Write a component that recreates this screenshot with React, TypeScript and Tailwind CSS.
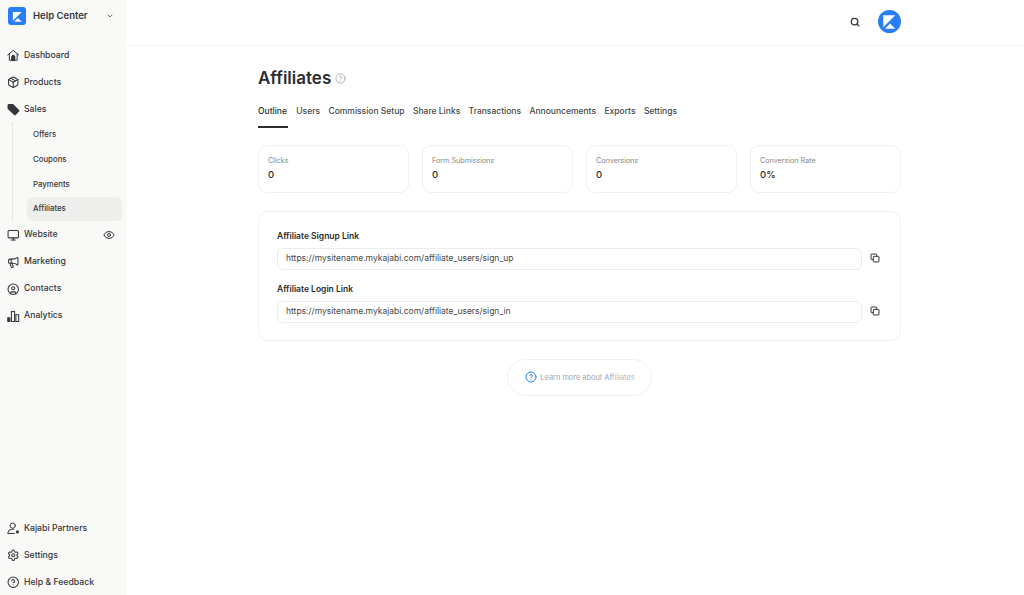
import { ChevronDown, Eye, CircleHelp, Package, Monitor, Megaphone, CircleUser, Settings, Search } from "lucide-react";

function KLogo({ className }: { className?: string }) {
  return (
    <svg viewBox="0 0 24 24" className={className}>
      <path d="M5.5 5.5h12.5L5.5 18z" fill="#fff" />
      <path d="M7.5 19.5l5-5.5 5.5 5.5z" fill="#fff" />
    </svg>
  );
}

function HouseIcon({ className }: { className?: string }) {
  return (
    <svg viewBox="0 0 24 24" fill="none" stroke="currentColor" strokeWidth={1.9} strokeLinejoin="round" strokeLinecap="round" className={className}>
      <path d="M1.5 11.5L12 2.5l10.5 9" />
      <path d="M4.5 9.5V21.5h15V9.5" />
      <path d="M9 21.5v-6.5a3 3 0 0 1 6 0v6.5z" fill="currentColor" />
    </svg>
  );
}

function TagIcon({ className }: { className?: string }) {
  return (
    <svg viewBox="0 0 24 24" className={className}>
      <path d="M1 4.5A2.5 2.5 0 0 1 3.5 2h8.2l11.4 11.4a2.2 2.2 0 0 1 0 3.1l-6.3 6.3a2.2 2.2 0 0 1-3.1 0L1 11.2z" fill="currentColor" />
    </svg>
  );
}

function BarsIcon({ className }: { className?: string }) {
  return (
    <svg viewBox="0 0 24 24" fill="none" stroke="currentColor" strokeWidth={2} className={className}>
      <rect x="1.5" y="15" width="4" height="7" fill="currentColor" />
      <rect x="8.5" y="3" width="6" height="19" />
      <rect x="17" y="9" width="5.5" height="13" />
    </svg>
  );
}

function PartnerIcon({ className }: { className?: string }) {
  return (
    <svg viewBox="0 0 24 24" fill="none" stroke="currentColor" strokeWidth={1.9} strokeLinecap="round" className={className}>
      <circle cx="11" cy="7" r="5" />
      <path d="M2 22v-2a7 7 0 0 1 7-6h4" />
      <path d="M2 22h12" />
      <circle cx="20" cy="19" r="3" fill="currentColor" stroke="none" />
    </svg>
  );
}

function CopyIcon({ className }: { className?: string }) {
  return (
    <svg viewBox="0 0 24 24" fill="none" stroke="currentColor" strokeWidth={2.4} strokeLinejoin="round" className={className}>
      <path d="M8 16H3.5a1 1 0 0 1-1-1V3.5a1 1 0 0 1 1-1H15a1 1 0 0 1 1 1V8" />
      <rect x="8" y="8" width="13.5" height="13.5" rx="1" />
    </svg>
  );
}

function NavItem({ icon: Icon, label, right }: { icon: any; label: string; right?: boolean }) {
  return (
    <div className="flex h-[27px] items-center pl-[7px] pr-[12px]">
      <Icon className="h-[12.5px] w-[12.5px] text-[#33363a]" strokeWidth={2} />
      <span className="ml-[4.5px] text-[8.7px] font-medium text-[#33363a]">{label}</span>
      {right && <Eye className="ml-auto h-[12px] w-[12px] text-[#33363a]" strokeWidth={2} />}
    </div>
  );
}

function SubItem({ label, active }: { label: string; active?: boolean }) {
  return (
    <div className={`flex h-[24.6px] items-center rounded-[6px] pl-[6px] text-[7.8px] font-medium text-[#33363a] ${active ? "bg-[#eeeeec]" : ""}`}>
      {label}
    </div>
  );
}

function Stat({ label, value }: { label: string; value: string }) {
  return (
    <div className="flex h-[48px] flex-1 flex-col justify-center rounded-[9px] border border-[#f0f0f0] pl-[9px] pt-[1px]">
      <div className="text-[7.2px] text-[#85878a]">{label}</div>
      <div className="mt-[1px] text-[9.5px] font-medium text-[#2b2d30]">{value}</div>
    </div>
  );
}

function LinkField({ label, url }: { label: string; url: string }) {
  return (
    <div>
      <div className="text-[8.5px] font-semibold leading-[12px] text-[#2b2d30]">{label}</div>
      <div className="mt-[6px] flex items-center">
        <div className="flex h-[22px] flex-1 items-center rounded-[6px] border border-[#ececec] pl-[8px] text-[8.5px] text-[#44474a]">{url}</div>
        <CopyIcon className="mb-[2px] ml-[8px] h-[10px] w-[10px] text-[#33363a]" />
      </div>
    </div>
  );
}

const tabs = ["Users", "Commission Setup", "Share Links", "Transactions", "Announcements", "Exports", "Settings"];

export default function App() {
  return (
    <div className="flex h-[595px] w-[1024px] overflow-hidden bg-white font-['Inter',sans-serif]">
      <aside className="flex w-[127px] flex-col bg-[#f9f9f8]">
        <div className="flex h-[42px] items-center pb-[10px] pl-[8px] pr-[13px]">
          <div className="flex h-[18px] w-[18px] items-center justify-center rounded-[3px] bg-[#2a7ef5]">
            <KLogo className="h-[17px] w-[17px]" />
          </div>
          <span className="ml-[7px] text-[9.5px] font-semibold text-[#33363a]">Help Center</span>
          <ChevronDown className="ml-auto h-[8px] w-[8px] text-[#55585c]" strokeWidth={2.5} />
        </div>
        <NavItem icon={HouseIcon} label="Dashboard" />
        <NavItem icon={Package} label="Products" />
        <NavItem icon={TagIcon} label="Sales" />
        <div className="ml-[12px] mr-[5px] border-l border-dotted border-[#d5d5d5] pl-[14px]">
          <SubItem label="Offers" />
          <SubItem label="Coupons" />
          <SubItem label="Payments" />
          <SubItem label="Affiliates" active />
        </div>
        <NavItem icon={Monitor} label="Website" right />
        <NavItem icon={Megaphone} label="Marketing" />
        <NavItem icon={CircleUser} label="Contacts" />
        <NavItem icon={BarsIcon} label="Analytics" />
        <div className="-mb-[1px] mt-auto">
          <NavItem icon={PartnerIcon} label="Kajabi Partners" />
          <NavItem icon={Settings} label="Settings" />
          <NavItem icon={CircleHelp} label="Help & Feedback" />
        </div>
      </aside>
      <div className="flex flex-1 flex-col">
        <header className="flex h-[46px] items-center justify-end border-b border-[#f2f2f2] pb-[2px] pr-[123px]">
          <Search className="mr-[18px] h-[10px] w-[10px] text-[#33363a]" strokeWidth={3} />
          <div className="flex h-[23px] w-[23px] items-center justify-center rounded-full bg-[#2a7ef5]">
            <KLogo className="h-[23px] w-[23px]" />
          </div>
        </header>
        <main className="ml-[131px] mr-[123px]">
          <div className="mt-[20px] flex items-center">
            <h1 className="text-[17px] font-semibold leading-[24px] text-[#2b2d30]">Affiliates</h1>
            <CircleHelp className="ml-[4px] h-[11px] w-[11px] text-[#8f9194]" strokeWidth={1.5} />
          </div>
          <nav className="mt-[15px] flex gap-[8.4px] text-[8.5px] font-medium text-[#44474a]">
            <div className="border-b-2 border-[#2b2d30] pb-[8px] pr-[1px] text-[#2b2d30]">Outline</div>
            {tabs.map((t) => (
              <div key={t}>{t}</div>
            ))}
          </nav>
          <div className="mt-[17px] flex gap-[13px]">
            <Stat label="Clicks" value="0" />
            <Stat label="Form Submissions" value="0" />
            <Stat label="Conversions" value="0" />
            <Stat label="Conversion Rate" value="0%" />
          </div>
          <section className="mt-[18px] flex h-[130px] flex-col justify-center gap-[13px] rounded-[10px] border border-[#f0f0f0] pl-[18px] pr-[20px] pt-[1px]">
            <LinkField label="Affiliate Signup Link" url="https://mysitename.mykajabi.com/affiliate_users/sign_up" />
            <LinkField label="Affiliate Login Link" url="https://mysitename.mykajabi.com/affiliate_users/sign_in" />
          </section>
          <div className="mt-[18px] flex justify-center">
            <div className="flex h-[37px] w-[145px] items-center justify-center rounded-full border border-[#f0f0f0] pl-[1px]">
              <CircleHelp className="h-[12px] w-[12px] text-[#2a7ef5]" strokeWidth={2} />
              <span className="ml-[3px] text-[7.4px] text-[#a3a6ad]">
                Learn more about <span className="text-[#6f9fe8]">Af</span>
                <span className="text-[#b5b9c6]">filiates</span>
              </span>
            </div>
          </div>
        </main>
      </div>
    </div>
  );
}
